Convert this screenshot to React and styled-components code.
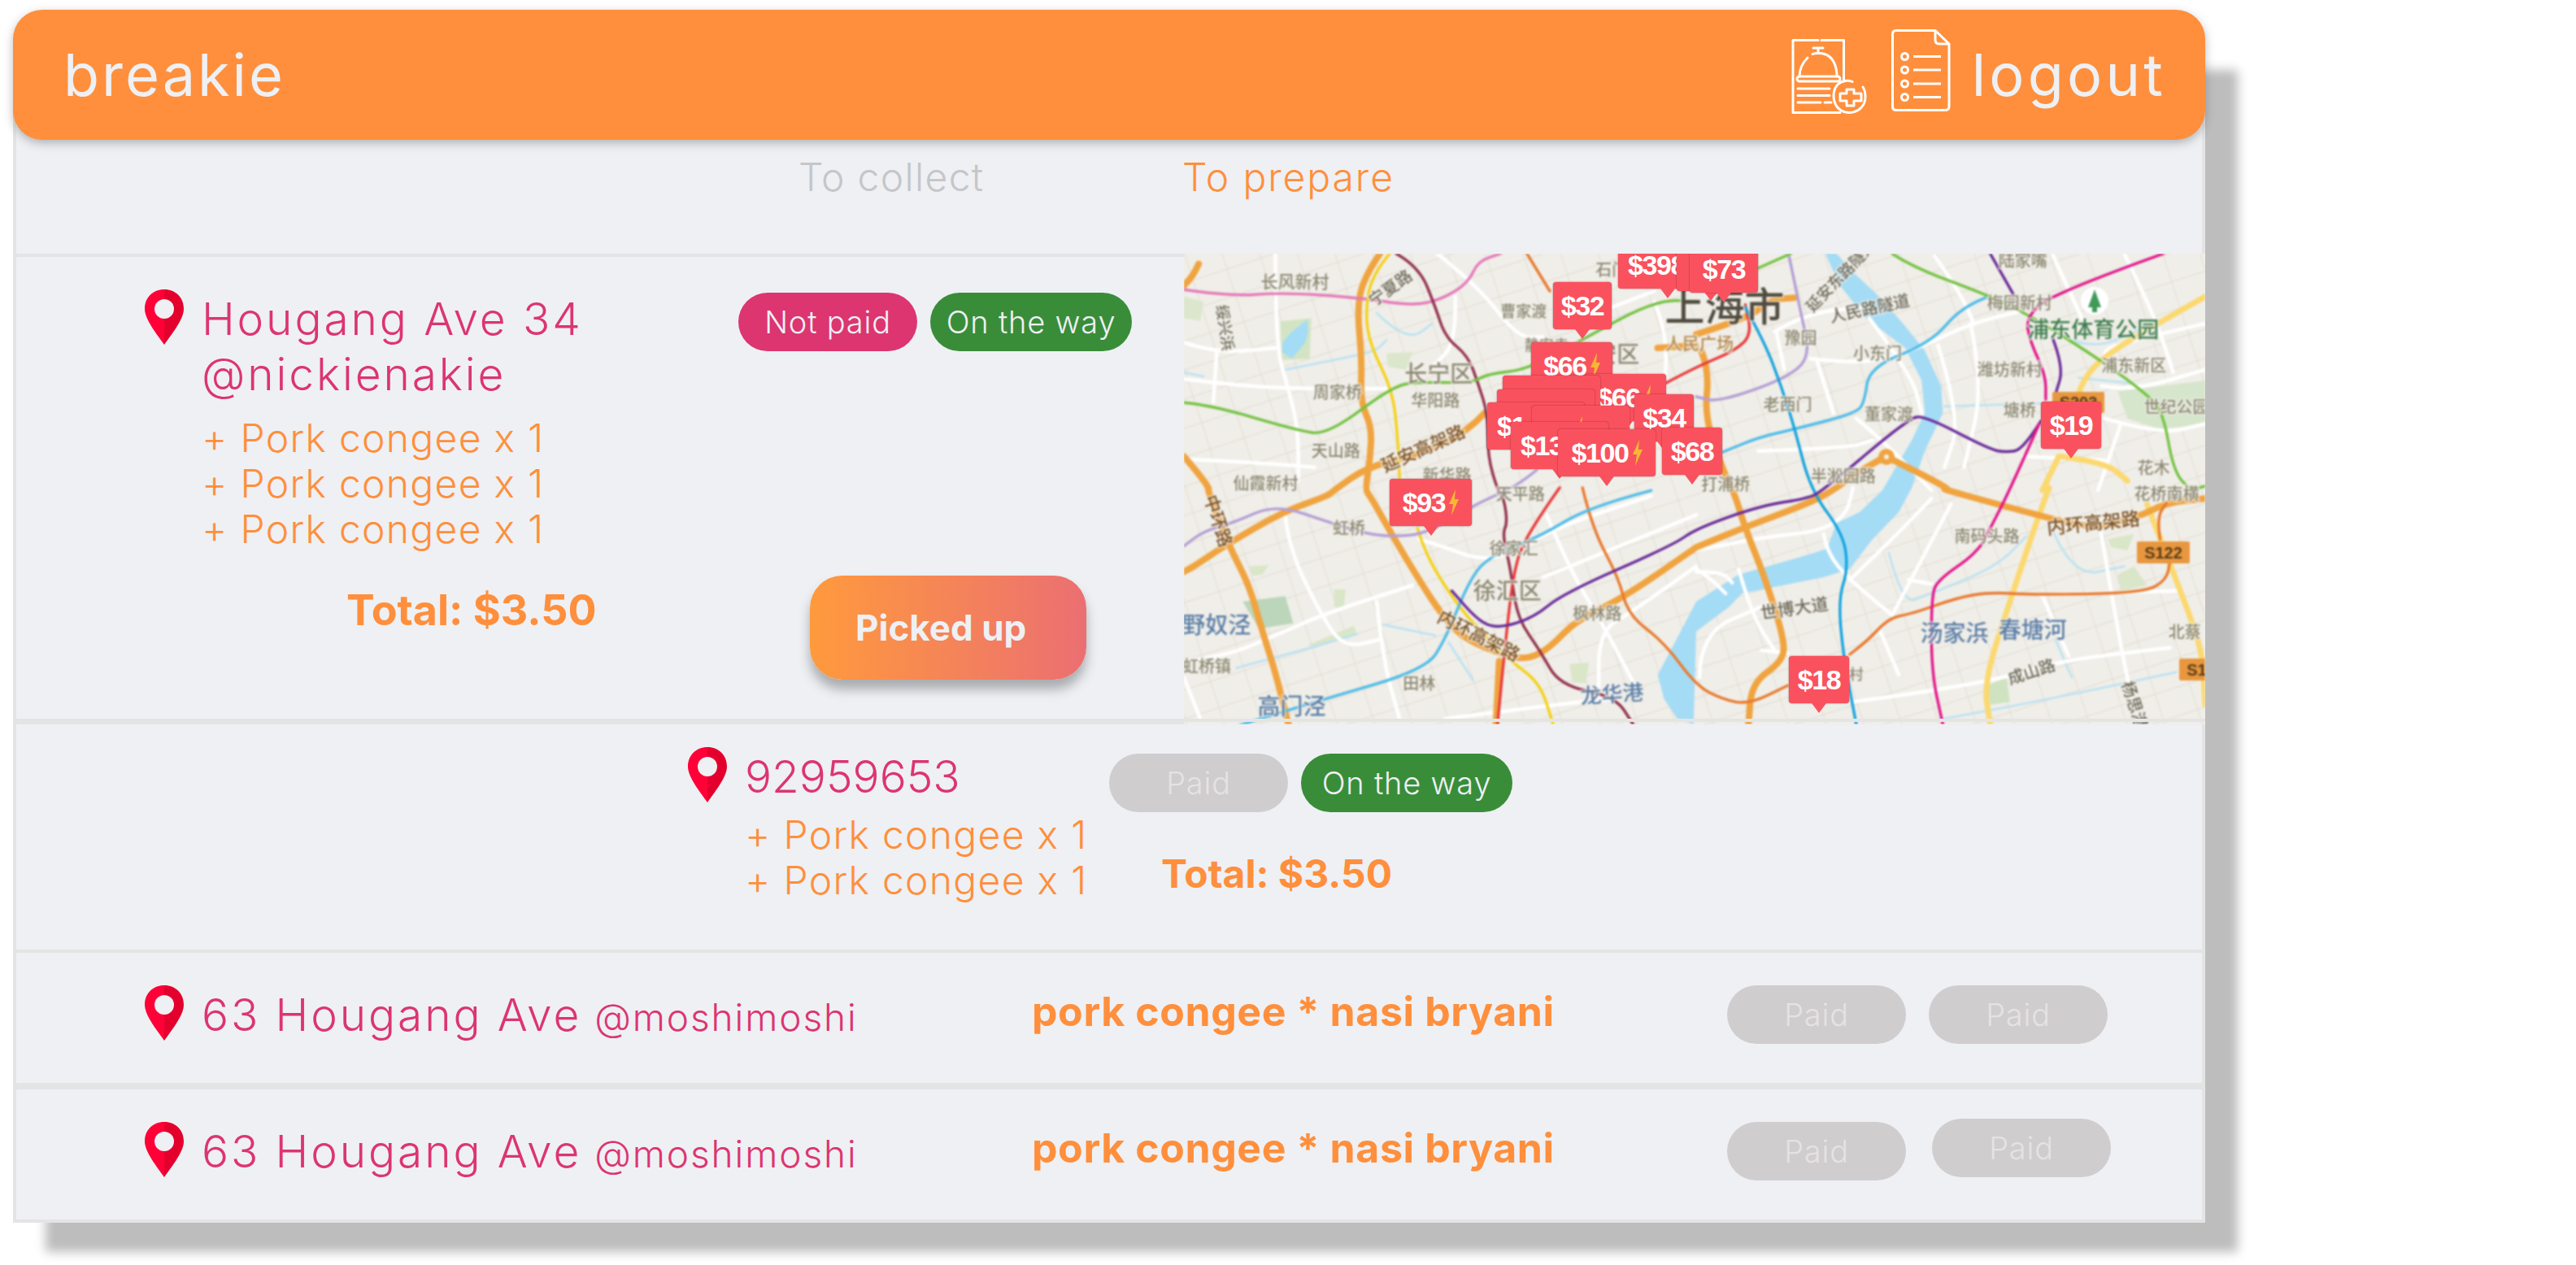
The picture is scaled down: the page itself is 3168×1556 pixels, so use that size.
import React from 'react';
import styled, { createGlobalStyle } from 'styled-components';

const ORANGE = '#ff8f3c';
const ROSE = '#dc356f';
const PANEL = '#eef0f4';
const FONT = 'Inter, "Open Sans", sans-serif';

const GlobalStyle = createGlobalStyle`
    html, body {
        margin: 0;
        background: #fff;
        font-family: ${FONT};
    }
`;

const Page = styled.div`
    width: 3168px;
    height: 1556px;
    padding: 12px 0 0 16px;
    box-sizing: border-box;
    overflow: hidden;
`;

const Header = styled.header`
    position: relative;
    z-index: 2;
    width: 2696px;
    height: 160px;
    box-sizing: border-box;
    padding: 0 48px 0 62px;
    display: flex;
    align-items: center;
    justify-content: space-between;
    background: ${ORANGE};
    border-radius: 36px;
    box-shadow: 0 4px 12px rgba(60, 60, 60, 0.35);
`;

const Brand = styled.div`
    font-size: 72px;
    font-weight: 400;
    letter-spacing: 3px;
    line-height: 80px;
    color: ${PANEL};
`;

const Nav = styled.nav`
    display: flex;
    align-items: center;
`;

const Logout = styled.div`
    margin-left: 26px;
    font-size: 72px;
    font-weight: 400;
    letter-spacing: 4.2px;
    line-height: 80px;
    color: ${PANEL};
`;

const Panel = styled.main`
    width: 2696px;
    margin-top: -122px;
    padding-top: 122px;
    box-sizing: border-box;
    background: ${PANEL};
    border: 4px solid #e4e4e4;
    border-top: 0;
    box-shadow: 40px 36px 12px #bdbdbd;
`;

const TabBar = styled.div`
    height: 144px;
    box-sizing: border-box;
    padding: 18px 0 0 962px;
    display: flex;
    border-bottom: 4px solid #e4e4e4;
`;

const Tab = styled.div`
    width: 472px;
    font-size: 48px;
    font-weight: 350;
    line-height: 56px;
    letter-spacing: ${p => (p.$active ? 1.9 : 1.3)}px;
    color: ${p => (p.$active ? ORANGE : '#c4c6c8')};
`;

const Row = styled.section`
    box-sizing: border-box;
    height: ${p => p.$height}px;
    border-bottom: ${p => p.$rule}px solid #e4e4e4;
    &:last-child {
        border-bottom: 0;
    }
`;

const MapRow = styled(Row)`
    display: flex;
`;

const OrderSide = styled.div`
    flex: 1;
    display: grid;
    grid-template-columns: 888px 1fr;
`;

const OrderMain = styled.div`
    padding: 40px 0 0 158px;
`;

const OrderActions = styled.div`
    padding-top: 44px;
`;

const PillRow = styled.div`
    display: flex;
    gap: ${p => p.$gap || 16}px;
`;

const Stop = styled.div`
    display: flex;
    gap: ${p => p.$gap || 22}px;
`;

const StopBody = styled.div`
    width: ${p => p.$width || 'auto'};
`;

const Address = styled.div`
    margin-top: 2px;
    font-size: 55px;
    font-weight: 350;
    line-height: 68px;
    letter-spacing: ${p => p.$spacing ?? 2.9}px;
    color: ${ROSE};
    white-space: nowrap;
`;

const Handle = styled.span`
    margin-left: 16px;
    font-size: 46px;
    letter-spacing: 1.9px;
`;

const Items = styled.ul`
    margin: ${p => p.$top}px 0 0;
    padding: 0;
    list-style: none;
    font-size: 48px;
    font-weight: 350;
    line-height: 56px;
    letter-spacing: 1.3px;
    color: ${ORANGE};
    white-space: nowrap;
`;

const Total = styled.div`
    margin: ${p => p.$top}px 0 0 ${p => p.$left}px;
    font-size: ${p => p.$size}px;
    font-weight: 700;
    line-height: 60px;
    color: ${ORANGE};
    white-space: nowrap;
`;

const Pill = styled.div`
    width: ${p => p.$width}px;
    height: 72px;
    display: flex;
    align-items: center;
    justify-content: center;
    border-radius: 36px;
    font-size: 38px;
    font-weight: 350;
    letter-spacing: 0.8px;
    color: ${p => (p.$tone === 'paid' ? '#e4e3e4' : PANEL)};
    background: ${p => ({ paid: '#d0cdce', unpaid: ROSE, way: '#398d39' }[p.$tone])};
    transform: ${p => (p.$raised ? 'translate(4px, -4px)' : 'none')};
`;

const ActionButton = styled.button`
    display: block;
    width: 340px;
    height: 128px;
    margin: 276px 0 0 88px;
    padding: 0 0 0 56px;
    border: 0;
    border-radius: 40px;
    text-align: left;
    font-family: ${FONT};
    font-size: 44px;
    font-weight: 700;
    color: ${PANEL};
    background: linear-gradient(90deg, #ff9a3d, #eb6f72);
    box-shadow: 0 12px 14px rgba(70, 70, 70, 0.4);
`;

const CenterRow = styled(Row)`
    display: flex;
    padding: 28px 0 0 826px;
`;

const CenterSide = styled.div`
    padding-top: 8px;
`;

const WideRow = styled(Row)`
    display: grid;
    grid-template-columns: 1091px 855px auto;
    padding: 40px 0 0 158px;
    align-items: start;
`;

const Dishes = styled.div`
    margin-top: 4px;
    font-size: 50px;
    font-weight: 700;
    line-height: 56px;
    letter-spacing: 0.6px;
    color: ${ORANGE};
    white-space: nowrap;
`;

/* ---- map ---- */

const MapBox = styled.div`
    position: relative;
    flex-shrink: 0;
    width: 1256px;
    height: 579px;
    margin: -4px -4px 0 0;
    overflow: hidden;
    background: #f0eee8;
    &::after {
        content: '';
        position: absolute;
        left: 0;
        right: 0;
        top: 572px;
        height: 4px;
        background: #e4e4e4;
    }
`;

const MapArt = styled.svg`
    display: block;
    filter: blur(0.8px);
`;

const Label = styled.text`
    font-family: "Noto Sans CJK SC", sans-serif;
    font-weight: 500;
    text-anchor: middle;
    dominant-baseline: central;
    paint-order: stroke;
    stroke: rgba(240, 238, 232, 0.75);
    stroke-width: 3px;
`;

const ShieldText = styled.text`
    font-family: "Liberation Sans", sans-serif;
    font-weight: 700;
    font-size: 20px;
    text-anchor: middle;
    fill: #5a3c18;
`;

const Price = styled.div.attrs(p => ({
    style: { left: p.$x, top: p.$y, width: p.$w },
}))`
    position: absolute;
    height: 58px;
    display: flex;
    align-items: center;
    justify-content: ${p => (p.$clipped ? 'flex-start' : 'center')};
    gap: 5px;
    box-sizing: border-box;
    padding-left: ${p => (p.$clipped ? 12 : 0)}px;
    border-radius: 4px;
    background: #f9525e;
    box-shadow: 0 0 2px rgba(110, 30, 40, 0.75);
    font-family: "Liberation Sans", sans-serif;
    font-size: 34px;
    font-weight: 700;
    letter-spacing: -1.4px;
    color: #fff;
    white-space: nowrap;
    &::after {
        content: '';
        position: absolute;
        left: 50%;
        bottom: -12px;
        margin-left: -9px;
        border: 9px solid transparent;
        border-bottom: 0;
        border-top: 12px solid #f9525e;
    }
`;

const QUAD = { a: [0, 0], b: [630, 0], c: [0, 292], d: [630, 292] };

// points are written as "a 10,20 b 30,40", each letter is one of the four map crops
const toPoints = route => {
    let quad = QUAD.a;
    const pts = [];
    route.trim().split(/\s+/).forEach(tok => {
        if (QUAD[tok]) {
            quad = QUAD[tok];
            return;
        }
        const [x, y] = tok.split(',').map(Number);
        pts.push([quad[0] + x / 2.489, quad[1] + y / 3 - 4]);
    });
    return pts;
};

const smooth = route => {
    const pts = toPoints(route);
    let d = `M${pts[0][0].toFixed(1)} ${pts[0][1].toFixed(1)}`;
    for (let i = 1; i < pts.length - 1; i++) {
        const mx = (pts[i][0] + pts[i + 1][0]) / 2;
        const my = (pts[i][1] + pts[i + 1][1]) / 2;
        d += `Q${pts[i][0].toFixed(1)} ${pts[i][1].toFixed(1)} ${mx.toFixed(1)} ${my.toFixed(1)}`;
    }
    const last = pts[pts.length - 1];
    return `${d}L${last[0].toFixed(1)} ${last[1].toFixed(1)}`;
};

const area = route => toPoints(route).map(p => p.map(n => n.toFixed(1)).join(',')).join(' ');

const RIVER = 'b 395,12 440,130 520,250 640,360 690,480 700,600 660,700 570,885 d 500,90 430,130 400,225 320,255 130,320 0,420 c 1490,600 1450,690 1470,780 1510,852 1560,872 d 0,530 100,440 140,390 390,330 470,300 540,190 620,90 660,0 b 700,740 755,600 750,500 700,370 640,280 560,170 480,80 430,12';

const PARKS = [
    ['a 0,170 60,190 50,260 0,250', '#dbe6cc'],
    ['a 295,262 390,250 385,400 300,405', '#d3e4c4'],
    ['a 620,380 700,375 680,440 625,430', '#dbe6cc'],
    ['c 180,420 310,400 335,500 230,520', '#bcd6bb'],
    ['c 460,375 495,375 490,440 460,440', '#d9e6c8'],
    ['c 380,580 520,510 530,540 400,590', '#d9e6c8'],
    ['c 200,290 260,285 240,320 210,325', '#d9e6c8'],
    ['c 1180,650 1240,645 1230,720 1190,720', '#d9e6c8'],
    ['b 1290,520 1558,480 1558,640 1420,660 1320,620', '#d6e6cc'],
    ['d 1260,190 1340,170 1320,230 1270,220', '#d9e6c8'],
    ['d 1290,320 1340,290 1380,360 1300,380', '#d9e6c8'],
    ['d 890,730 950,700 960,790 900,800', '#cfe3c0'],
];

const LAKE = 'a 302,340 330,300 378,255 380,300 372,340 330,400 300,375';

const CANALS = [
    'c 160,665 360,600 530,540',
    'a 310,440 500,395 590,370 620,330',
    'a 590,230 620,270 700,325 760,270',
    'd 760,852 1000,800 1470,680',
    'b 1140,330 1220,360 1330,310 1400,260',
    'a 0,450 60,465',
    'c 610,505 770,545',
    'c 810,570 885,710',
    'd 590,240 630,430 710,395 920,290 1010,180',
    'b 760,575 1060,565',
    'd 1085,140 1150,330 1310,290',
    'b 1170,470 1330,490',
    'd 1100,560 1150,700',
];

const WHITE = [
    'a 0,340 100,380 280,360',
    'a 100,380 90,560',
    'a 0,475 100,490 310,510 620,510',
    'a 280,12 280,350 320,510 350,660 350,850',
    'a 775,12 900,130 1020,320 1100,320',
    'a 830,170 835,340 760,430',
    'a 1310,210 1440,150',
    'a 1440,190 1480,300 1470,560',
    'a 0,770 180,780 400,800',
    'b 240,300 340,230 520,210',
    'b 245,300 270,440',
    'b 350,400 530,425 700,350 840,270 990,225',
    'b 840,270 880,500 820,800',
    'b 740,350 810,620 760,800',
    'b 490,620 570,700 720,885',
    'b 530,250 660,460 690,600',
    'b 730,20 810,160 850,270',
    'b 370,410 420,600',
    'b 1090,12 1180,250',
    'b 1310,12 1400,230 1460,450',
    'b 1250,620 1420,680 1558,640',
    'b 1300,640 1230,885',
    'b 1558,270 1270,350 1250,380',
    'b 1240,500 1330,520 1558,440',
    'b 1000,760 1250,775',
    'b 190,740 460,730 540,700',
    'c 310,100 320,220 420,470 490,590 600,560',
    'c 0,640 130,620 270,550 430,465 700,360',
    'c 720,190 790,215 900,265 1000,250 1130,150 1430,30',
    'c 1100,330 1568,100',
    'c 1110,100 1180,300 1280,500 1360,680 1400,780',
    'c 1568,290 1370,460 1270,530 1270,790',
    'c 590,420 610,640 660,852',
    'c 0,700 50,852',
    'c 800,852 1200,790 1320,780',
    'd 0,230 90,210 220,180 380,160 460,100 480,0',
    'd 390,170 400,240 470,340 600,470',
    'd 10,700 10,620 60,510 160,460 230,420',
    'd 130,300 170,470 240,600',
    'd 0,310 80,310 110,350',
    'd 470,340 600,190 720,40',
    'd 600,470 780,60',
    'd 650,340 720,355',
    'd 480,790 880,725 1100,640 1450,590',
    'd 1230,100 1300,600 1340,800',
    'd 1470,380 1050,395',
    'd 560,520 620,690',
    'd 1060,400 1140,620',
    'd 200,600 280,610',
    'd 0,300 40,330 90,390',
];

const EXPRESS = [
    'a 600,12 550,100 530,220 545,400 540,560 575,650 570,770 555,885 c 570,30 640,180 720,340 790,470 860,560 1000,625 1060,630 1120,590 1200,490 1340,410 1568,220 d 0,220 150,145 360,50 430,0 b 480,830 580,760',
    'a 920,600 870,670 700,760 560,800 460,885 c 440,30 300,90 130,210 30,290 0,310',
    'a 45,50 30,90 0,130',
    'a 0,760 50,830 80,885 c 70,0 140,220 200,360 240,530 280,680 320,872',
    'b 580,760 790,885 d 740,0 920,60 1060,105 1200,150 1350,110 1440,55 1558,40',
    'b 15,370 40,440 25,620 95,850 d 120,30 150,150 210,330 270,560 265,640 170,720 160,872',
    'b 0,310 160,250 230,180 300,175',
    'a 1450,360 1568,350',
    'c 965,640 955,872',
];

const YELLOW = [
    'd 1080,0 1040,130 960,420 880,720 900,872',
    'b 1110,760 1060,885',
    'b 1170,530 1180,490 1230,410 1340,320 1558,170',
    'b 1110,760 1250,780 1320,850',
    'd 1380,60 1450,280 1520,500 1550,620 1558,800',
];

const METRO = [
    ['#e57ab9', 'a 0,145 140,170 300,155 540,175 700,205 790,180 870,120 900,40 970,12'],
    ['#f5d116', 'a 630,12 575,90 555,230 570,350 640,520 655,700 660,840'],
    ['#f5d116', 'c 715,150 740,250 830,420 900,520 1000,640 1090,720 1130,872'],
    ['#93324d', 'a 650,12 720,60 770,210 800,320 870,390 900,490 930,600 930,760 960,885 c 980,40 990,130 975,170 1000,300 1020,480 1090,600 1150,730 1320,770 1375,872'],
    ['#74c243', 'a 0,562 80,570 350,665 440,680 640,500 720,485 880,490 930,455 1050,440 1210,335 1440,185 1568,185'],
    ['#74c243', 'b 190,65 290,12'],
    ['#74c243', 'b 600,12 660,60 880,160 1000,225 1220,390 1380,530 1430,600 1460,810 1510,885 1558,870'],
    ['#b39fd6', 'b 285,25 320,230 350,390 280,470 70,560 0,540'],
    ['#b39fd6', 'a 1080,810 1030,860 c 950,30 880,70 740,170 640,180 560,170 450,130 280,60 150,130 60,160 0,215'],
    ['#e83a3a', 'a 1475,490 1568,430 b 120,370 170,310 150,200'],
    ['#e83a3a', 'c 1150,0 1050,170 1010,300 985,560 960,872'],
    ['#e87a2e', 'a 1050,12 1120,150'],
    ['#e87a2e', 'c 1220,0 1250,150 1330,330 1360,470 1470,570 1568,730 d 80,780 160,800 280,730'],
    ['#e87a2e', 'd 470,615 520,570 590,480 660,465 800,405 900,385 1030,395 1370,388 1440,340 1450,270'],
    ['#e87a2e', 'd 1420,190 1410,110 1440,55'],
    ['#4fbce8', 'b 885,175 810,210 720,340 530,430 515,560 490,600 300,660 190,690 80,745'],
    ['#4fbce8', 'c 1430,10 1240,70 1090,180 930,255 870,350 800,560 740,670 430,780 160,880'],
    ['#14a3de', 'b 150,210 210,340 260,500 300,650 350,885 d 450,170 465,300 435,410 450,620 490,872'],
    ['#6a2c9a', 'b 900,12 970,160'],
    ['#6a2c9a', 'b 1090,320 1125,430 1100,530'],
    ['#6a2c9a', 'b 1055,630 1000,735 950,745 900,735 700,610 650,620 390,885 d 340,40 200,65 0,150 c 1500,210 1160,390 1070,480 960,520 900,490 820,380'],
    ['#e2168c', 'b 1430,12 1090,160 1010,245 1020,330 1070,460 1070,550'],
    ['#e2168c', 'b 1050,640 960,885 d 900,150 860,240 740,340 720,400 720,680 755,872'],
];

const GREY = '#8d8974';
const DARK = '#6f6b5c';
const BROWN = '#7d5428';
const BLUE = '#5b7fa8';

const LABELS = [
    ['a', 340, 110, '长风新村', 21, GREY],
    ['a', 130, 285, '绥兴浜', 19, DARK, 82],
    ['a', 630, 135, '宁夏路', 20, DARK, -36],
    ['a', 1040, 220, '曹家渡', 19, GREY],
    ['a', 780, 450, '长宁区', 28, GREY],
    ['a', 470, 520, '周家桥', 20, GREY],
    ['a', 770, 550, '华阳路', 20, GREY],
    ['a', 465, 735, '天山路', 20, GREY],
    ['a', 730, 725, '延安高架路', 22, BROWN, -24],
    ['a', 250, 855, '仙霞新村', 20, GREY],
    ['a', 805, 825, '新华路', 20, GREY],
    ['a', 1290, 378, '静安区', 28, GREY],
    ['a', 1110, 345, '静安寺', 18, GREY],
    ['a', 1310, 68, '石门', 20, GREY],
    ['b', 10, 340, '人民广场', 21, '#b58a4e'],
    ['b', 87, 195, '上海市', 49, '#504c40'],
    ['b', 320, 320, '豫园', 20, GREY],
    ['b', 555, 375, '小东门', 20, GREY],
    ['b', 280, 565, '老西门', 20, GREY],
    ['b', 530, 210, '人民路隧道', 20, DARK, -12],
    ['b', 440, 90, '延安东路隧道', 19, DARK, -46],
    ['b', 590, 600, '董家渡', 20, GREY],
    ['b', 990, 190, '梅园新村', 20, GREY],
    ['b', 1215, 285, '浦东体育公园', 27, '#3f7f50'],
    ['b', 960, 435, '潍坊新村', 20, GREY],
    ['b', 990, 585, '塘桥', 20, GREY],
    ['b', 1340, 420, '浦东新区', 20, GREY],
    ['b', 1470, 575, '世纪公园', 20, GREY],
    ['b', 1400, 800, '花木', 20, GREY],
    ['b', 450, 830, '半淞园路', 20, GREY],
    ['b', 90, 860, '打浦桥', 20, GREY],
    ['b', 1000, 35, '陆家嘴', 20, GREY],
    ['c', 1030, 20, '天平路', 20, GREY],
    ['c', 505, 145, '虹桥', 20, GREY],
    ['c', 1010, 220, '徐家汇', 20, GREY],
    ['c', 990, 375, '徐汇区', 28, GREY],
    ['c', 100, 500, '野奴泾', 28, BLUE],
    ['c', 70, 655, '虹桥镇', 20, GREY],
    ['c', 720, 718, '田林', 20, GREY],
    ['c', 330, 800, '高门泾', 28, BLUE],
    ['c', 1310, 755, '龙华港', 26, BLUE, -4],
    ['c', 1265, 460, '枫林路', 20, GREY],
    ['c', 905, 540, '内环高架路', 22, BROWN, 27],
    ['c', 110, 120, '中环路', 22, BROWN, 72],
    ['d', 300, 440, '世博大道', 21, DARK, -8],
    ['d', 890, 175, '南码头路', 20, GREY],
    ['d', 790, 530, '汤家浜', 28, BLUE],
    ['d', 1030, 520, '春塘河', 28, BLUE],
    ['d', 1215, 125, '内环高架路', 23, BROWN, -6],
    ['d', 1025, 675, '成山路', 20, DARK, -18],
    ['d', 1345, 800, '杨思港', 20, DARK, 72],
    ['d', 1495, 530, '北蔡', 20, GREY],
    ['d', 490, 685, '村', 18, GREY],
    ['d', 1440, 20, '花桥南横', 20, GREY],
];

const SHIELDS = [
    { x: 1068, y: 170, w: 64, h: 26, text: 'S203' },
    { x: 1172, y: 354, w: 65, h: 27, text: 'S122' },
    { x: 1224, y: 498, w: 65, h: 27, text: 'S122' },
];

const PRICES = [
    { x: 534, y: -15, w: 122, text: '$398', clipped: true },
    { x: 606, y: -12, w: 84, text: '' },
    { x: 622, y: -10, w: 84, text: '$73' },
    { x: 454, y: 35, w: 72, text: '$32' },
    { x: 427, y: 109, w: 100, text: '$66', bolt: true },
    { x: 493, y: 148, w: 100, text: '$66', bolt: true },
    { x: 392, y: 150, w: 120, text: '' },
    { x: 385, y: 167, w: 120, text: '' },
    { x: 373, y: 183, w: 120, text: '$1', clipped: true },
    { x: 428, y: 187, w: 120, text: '', bolt: true },
    { x: 554, y: 173, w: 73, text: '$34' },
    { x: 402, y: 207, w: 120, text: '$13', clipped: true },
    { x: 460, y: 216, w: 120, text: '$100', bolt: true },
    { x: 588, y: 214, w: 74, text: '$68' },
    { x: 253, y: 277, w: 101, text: '$93', bolt: true },
    { x: 1054, y: 182, w: 74, text: '$19' },
    { x: 744, y: 495, w: 74, text: '$18' },
];

const Bolt = () => (
    <svg width="12" height="32" viewBox="0 0 12 32">
        <path d="M8 0 L0 18 L5 18 L3 32 L12 12 L7 12 Z" fill="#f7b733" />
    </svg>
);

const StreetMap = () => {
    const labels = LABELS.map(([q, zx, zy, text, size, color, rot]) => {
        const [[x, y]] = toPoints(`${q} ${zx},${zy}`);
        return (
            <Label
                key={`${q}${text}${zx}`}
                x={x}
                y={y}
                fontSize={size}
                fill={color}
                transform={rot ? `rotate(${rot} ${x} ${y})` : undefined}
            >
                {text}
            </Label>
        );
    });

    return (
        <MapBox>
            <MapArt width="1256" height="579" viewBox="0 0 1256 579">
                <defs>
                    <pattern id="streets" width="44" height="34" patternUnits="userSpaceOnUse" patternTransform="rotate(-18)">
                        <path d="M0 0H44M0 0V34" stroke="#dfdcd2" strokeWidth="1.8" fill="none" />
                    </pattern>
                </defs>
                <rect width="1256" height="579" fill="#f0eee8" />
                <rect width="1256" height="579" fill="url(#streets)" />
                {PARKS.map(([r, fill]) => <polygon key={r} points={area(r)} fill={fill} />)}
                <polygon points={area(LAKE)} fill="#a5dcf5" />
                <polygon points={area(RIVER)} fill="#a5dcf5" />
                <g fill="none" strokeLinecap="round" strokeLinejoin="round">
                    {CANALS.map(r => <path key={r} d={smooth(r)} stroke="#b9e2f4" strokeWidth="2.5" />)}
                    {WHITE.map(r => <path key={r} d={smooth(r)} stroke="#fff" strokeWidth="4.5" />)}
                    {YELLOW.map(r => <path key={r} d={smooth(r)} stroke="#fbd970" strokeWidth="7" />)}
                    {EXPRESS.map(r => <path key={r} d={smooth(r)} stroke="#f0a440" strokeWidth="8" />)}
                    {METRO.map(([c, r]) => <path key={r} d={smooth(r)} stroke={c} strokeWidth="3.4" />)}
                </g>
                <circle cx="864" cy="250" r="10" fill="#f0a440" />
                <circle cx="864" cy="250" r="3" fill="#f0eee8" />
                <circle cx="1120" cy="58" r="17" fill="#fff" />
                <path d="M1120 44 L1128 66 H1123 V72 H1117 V66 H1112 Z" fill="#3f9a58" />
                {SHIELDS.map(s => (
                    <g key={s.y}>
                        <rect x={s.x} y={s.y} width={s.w} height={s.h} rx="2" fill="#e8973f" />
                        <ShieldText x={s.x + s.w / 2} y={s.y + s.h - 6}>{s.text}</ShieldText>
                    </g>
                ))}
                {labels}
            </MapArt>
            {PRICES.map(p => (
                <Price key={`${p.x}-${p.y}`} $x={p.x} $y={p.y} $w={p.w} $clipped={p.clipped}>
                    {p.text}
                    {p.bolt && <Bolt />}
                </Price>
            ))}
        </MapBox>
    );
};

/* ---- icons ---- */

const BellIcon = () => (
    <svg width="94" height="92" viewBox="0 0 94 92" fill="none" stroke="#fff" strokeWidth="3" strokeLinecap="round" strokeLinejoin="round" style={{ marginTop: 4 }}>
        <path d="M33 1.5H2V90.5H60M37 1.5H64.5V52" />
        <path d="M27 11H39M33 11V17" />
        <path d="M26 18.5C29 17 37 17 41 18.5C50 21.5 56 31 56 46M20 23C14 29 10 36 10 46" />
        <rect x="7" y="46" width="53" height="6" rx="3" />
        <path d="M8 61H47M8 69.5H47M8 78H36M41 78H49" />
        <path d="M75 52.5C70 50 62 51 57 56C52 61 51 70 53 77C56 87 65 91 72 90.5C84 90 91 81 91 71C91 66 90 62 88 59" />
        <path d="M68 62H77V67H86V76H77V82H68V76H60V67H68Z" />
    </svg>
);

const ListIcon = () => (
    <svg width="73" height="101" viewBox="0 0 73 101" fill="none" stroke="#fff" strokeWidth="3" strokeLinecap="round" strokeLinejoin="round" style={{ marginLeft: 29, marginTop: -12 }}>
        <path d="M54 1.5H6Q1.5 1.5 1.5 6V95Q1.5 99.5 6 99.5H66Q71 99.5 71 95V18L54 1.5V13Q54 18 59 18H71" />
        <circle cx="16.5" cy="33.5" r="4" />
        <circle cx="16.5" cy="50" r="4" />
        <circle cx="16.5" cy="67" r="4" />
        <circle cx="16.5" cy="83.5" r="4" />
        <path d="M27 33.5H61M27 50H61M27 67H61M27 83.5H61" strokeLinecap="butt" />
    </svg>
);

const Marker = () => (
    <svg width="48" height="68" viewBox="0 0 48 68" style={{ flexShrink: 0 }}>
        <path d="M24 0C10 0 0 10 0 24C0 37 15 55 24 68Z" fill="#ff0037" />
        <path d="M24 0C38 0 48 10 48 24C48 37 33 55 24 68Z" fill="#e3002d" />
        <circle cx="24" cy="24" r="12" fill={PANEL} />
    </svg>
);

const PORK = '+ Pork congee x 1';

const App = () => (
    <Page>
        <GlobalStyle />
        <Header>
            <Brand>breakie</Brand>
            <Nav>
                <BellIcon />
                <ListIcon />
                <Logout>logout</Logout>
            </Nav>
        </Header>
        <Panel>
            <TabBar>
                <Tab>To collect</Tab>
                <Tab $active>To prepare</Tab>
            </TabBar>
            <MapRow $height={575} $rule={7}>
                <OrderSide>
                    <OrderMain>
                        <Stop>
                            <Marker />
                            <StopBody>
                                <Address>Hougang Ave 34<br />@nickienakie</Address>
                                <Items $top={17}>
                                    <li>{PORK}</li>
                                    <li>{PORK}</li>
                                    <li>{PORK}</li>
                                </Items>
                                <Total $top={42} $left={178} $size={52}>Total: $3.50</Total>
                            </StopBody>
                        </Stop>
                    </OrderMain>
                    <OrderActions>
                        <PillRow>
                            <Pill $tone="unpaid" $width={220}>Not paid</Pill>
                            <Pill $tone="way" $width={248}>On the way</Pill>
                        </PillRow>
                        <ActionButton type="button">Picked up</ActionButton>
                    </OrderActions>
                </OrderSide>
                <StreetMap />
            </MapRow>
            <CenterRow $height={281} $rule={4}>
                <Stop>
                    <Marker />
                    <StopBody $width="448px">
                        <Address $spacing={0}>92959653</Address>
                        <Items $top={10}>
                            <li>{PORK}</li>
                            <li>{PORK}</li>
                        </Items>
                    </StopBody>
                </Stop>
                <CenterSide>
                    <PillRow>
                        <Pill $tone="paid" $width={220}>Paid</Pill>
                        <Pill $tone="way" $width={260}>On the way</Pill>
                    </PillRow>
                    <Total $top={46} $left={64} $size={48}>Total: $3.50</Total>
                </CenterSide>
            </CenterRow>
            <WideRow $height={168} $rule={8}>
                <Stop>
                    <Marker />
                    <Address>63 Hougang Ave<Handle>@moshimoshi</Handle></Address>
                </Stop>
                <Dishes>pork congee * nasi bryani</Dishes>
                <PillRow $gap={28}>
                    <Pill $tone="paid" $width={220}>Paid</Pill>
                    <Pill $tone="paid" $width={220}>Paid</Pill>
                </PillRow>
            </WideRow>
            <WideRow $height={160} $rule={0}>
                <Stop>
                    <Marker />
                    <Address>63 Hougang Ave<Handle>@moshimoshi</Handle></Address>
                </Stop>
                <Dishes>pork congee * nasi bryani</Dishes>
                <PillRow $gap={28}>
                    <Pill $tone="paid" $width={220}>Paid</Pill>
                    <Pill $tone="paid" $width={220} $raised>Paid</Pill>
                </PillRow>
            </WideRow>
        </Panel>
    </Page>
);

export default App;
